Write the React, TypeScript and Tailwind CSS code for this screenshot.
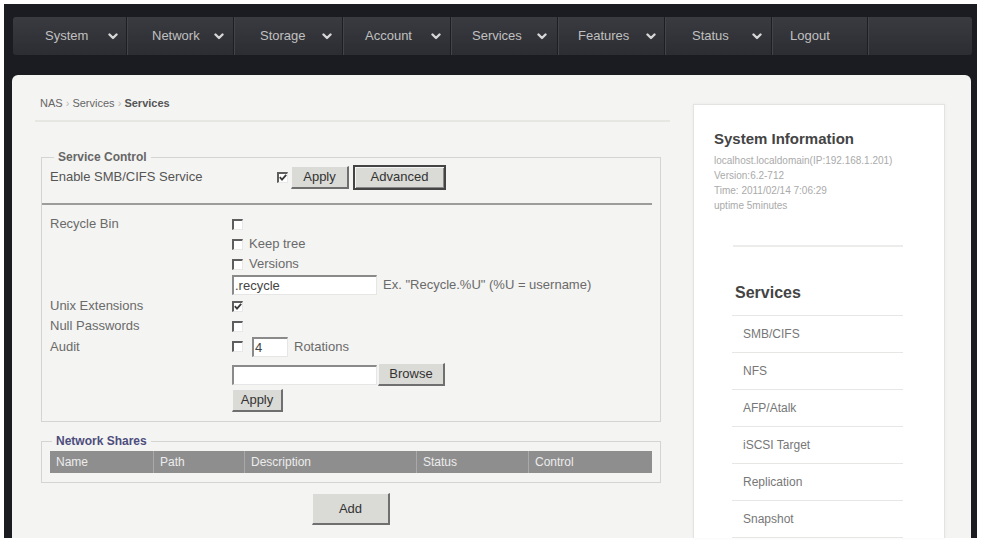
import type { ReactNode } from 'react';

const navItems = [
  { label: 'System', cell: 'w-[114px] pl-[32px] pr-[8px]', caret: true },
  { label: 'Network', cell: 'w-[107px] pl-[25px] pr-[9px]', caret: true },
  { label: 'Storage', cell: 'w-[109px] pl-[26px] pr-[10px]', caret: true },
  { label: 'Account', cell: 'w-[108px] pl-[22px] pr-[9px]', caret: true },
  { label: 'Services', cell: 'w-[107px] pl-[21px] pr-[10px]', caret: true },
  { label: 'Features', cell: 'w-[107px] pl-[20px] pr-[8px]', caret: true },
  { label: 'Status', cell: 'w-[107px] pl-[27px] pr-[9px]', caret: true },
  { label: 'Logout', cell: 'w-[96px] pl-[18px]', caret: false },
];

const columns = [
  { label: 'Name', w: 'w-[104px]' },
  { label: 'Path', w: 'w-[91px]' },
  { label: 'Description', w: 'w-[172px]' },
  { label: 'Status', w: 'w-[112px]' },
  { label: 'Control', w: 'flex-1' },
];

const serviceLinks = ['SMB/CIFS', 'NFS', 'AFP/Atalk', 'iSCSI Target', 'Replication', 'Snapshot'];

function Caret() {
  return (
    <svg width="10" height="7" viewBox="0 0 10 7" fill="none">
      <path d="M1.5 1.5 L5 5 L8.5 1.5" stroke="#d6d6d6" strokeWidth="2.4" strokeLinecap="round" strokeLinejoin="round" />
    </svg>
  );
}

function Check({ checked = false }: { checked?: boolean }) {
  return (
    <span className="inline-flex h-[11px] w-[11px] shrink-0 items-center justify-center border-b border-l-2 border-r border-t-2 border-b-[#e8e8e8] border-l-[#5e5e5e] border-r-[#e8e8e8] border-t-[#5e5e5e] bg-white">
      {checked && (
        <svg width="8" height="7" viewBox="0 0 8 7" fill="none">
          <path d="M0.8 3.2 L3 5.6 L7.2 0.8" stroke="#3a3a3a" strokeWidth="1.8" />
        </svg>
      )}
    </span>
  );
}

function Btn({ children, className = '' }: { children: ReactNode; className?: string }) {
  return (
    <button
      className={`flex items-center justify-center border border-b-2 border-r-2 border-b-[#6f6f6f] border-l-[#f4f4f4] border-r-[#6f6f6f] border-t-[#f4f4f4] bg-[#dadad6] text-[13px] text-[#333] ${className}`}
    >
      {children}
    </button>
  );
}

function TextBox({ value = '', className = '' }: { value?: string; className?: string }) {
  return (
    <input
      readOnly
      value={value}
      className={`h-[20px] border-b border-l-2 border-r border-t-2 border-b-[#e6e6e6] border-l-[#8a8a8a] border-r-[#e6e6e6] border-t-[#8a8a8a] bg-white px-[1px] text-[13px] text-[#444] outline-none ${className}`}
    />
  );
}

export default function App() {
  return (
    <div className="h-[542px] w-[982px] overflow-hidden bg-white font-['Liberation_Sans',Arial,sans-serif]">
      <div className="ml-[4px] mt-[4px] flex h-[534px] w-[973px] flex-col bg-[#1b1c21] pt-[13px]">
        {/* top menu */}
        <nav className="ml-[9px] flex h-[38px] w-[959px] rounded-[3px] bg-linear-to-b from-[#3a3b40] to-[#2c2d32] text-[13px] text-[#c0c0c0]">
          {navItems.map((item) => (
            <div
              key={item.label}
              className={`flex items-center justify-between border-r border-[#1d1e22] shadow-[1px_0_0_#43444a] ${item.cell}`}
            >
              <span>{item.label}</span>
              {item.caret && <Caret />}
            </div>
          ))}
          <div className="flex-1" />
        </nav>

        {/* content panel */}
        <div className="ml-[8px] mt-[20px] flex w-[959px] flex-1 rounded-t-[6px] bg-[#f4f4f2]">
          <div className="w-[668px] pl-[23px]">
            <div className="h-[47px] w-[635px] border-b-2 border-[#e6e6e3] pl-[5px] pt-[21px] text-[11px] leading-[14px] text-[#666]">
              NAS <span className="text-[#bbb]">›</span> Services <span className="text-[#bbb]">›</span>{' '}
              <span className="font-bold text-[#555]">Services</span>
            </div>

            <fieldset className="ml-[6px] mt-[28px] w-[620px] border border-[#d4d4d2]">
              <legend className="ml-[12px] px-[4px] text-[12px] font-bold leading-[14px] text-[#666]">Service Control</legend>
              <div className="flex h-[25px] items-center pl-[8px] pt-[1px]">
                <span className="w-[227px] text-[13px] text-[#555]">Enable SMB/CIFS Service</span>
                <Check checked />
                <Btn className="ml-[3px] h-[23px] w-[58px]">Apply</Btn>
                <button className="ml-[4px] flex h-[25px] w-[93px] items-center justify-center border-2 border-[#444] bg-[#dadad6] text-[13px] text-[#333] shadow-[inset_1px_1px_0_#f4f4f4,inset_-1px_-1px_0_#888]">
                  Advanced
                </button>
              </div>
              <div className="mt-[14px] h-[2px] w-[610px] bg-[#9c9c9a]" />

              <div className="mt-[9px] grid grid-cols-[182px_1fr] pl-[8px] text-[13px] text-[#6a6a6a]">
                <div className="flex h-[20px] items-center">Recycle Bin</div>
                <div className="flex h-[20px] items-center">
                  <Check />
                </div>
                <div />
                <div className="flex h-[20px] items-center gap-[6px]">
                  <Check />
                  Keep tree
                </div>
                <div />
                <div className="flex h-[20px] items-center gap-[6px]">
                  <Check />
                  Versions
                </div>
                <div />
                <div className="flex h-[22px] items-center">
                  <TextBox value=".recycle" className="w-[145px]" />
                  <span className="ml-[6px]">Ex. "Recycle.%U" (%U = username)</span>
                </div>
                <div className="flex h-[20px] items-center">Unix Extensions</div>
                <div className="flex h-[20px] items-center">
                  <Check checked />
                </div>
                <div className="flex h-[20px] items-center">Null Passwords</div>
                <div className="flex h-[20px] items-center">
                  <Check />
                </div>
                <div className="flex h-[21px] items-center">Audit</div>
                <div className="flex h-[21px] items-center">
                  <Check />
                  <TextBox value="4" className="ml-[9px] w-[36px]" />
                  <span className="ml-[6px]">Rotations</span>
                </div>
                <div />
                <div className="mt-[6px] flex h-[23px] items-center">
                  <TextBox className="w-[145px]" />
                  <Btn className="ml-[1px] h-[23px] w-[67px]">Browse</Btn>
                </div>
                <div />
                <div className="mt-[3px] flex h-[23px] items-center">
                  <Btn className="h-[23px] w-[51px]">Apply</Btn>
                </div>
              </div>
              <div className="h-[9px]" />
            </fieldset>

            <fieldset className="ml-[6px] mt-[12px] w-[620px] border border-[#d4d4d2]">
              <legend className="ml-[10px] px-[4px] text-[12px] font-bold leading-[14px] text-[#4d4d7d]">Network Shares</legend>
              <div className="ml-[8px] mt-[3px] flex h-[22px] w-[602px] bg-[#8e8e8e] text-[12px] text-[#ececec]">
                {columns.map((c, i) => (
                  <div
                    key={c.label}
                    className={`flex items-center pl-[6px] ${c.w} ${i < columns.length - 1 ? 'border-r border-[#a9a9a9]' : ''}`}
                  >
                    {c.label}
                  </div>
                ))}
              </div>
              <div className="h-[9px]" />
            </fieldset>

            <div className="ml-[6px] mt-[10px] flex w-[620px] justify-center">
              <Btn className="h-[32px] w-[78px]">Add</Btn>
            </div>
          </div>

          {/* sidebar */}
          <aside className="ml-[13px] mt-[29px] w-[252px] border border-b-0 border-[#e3e3e1] bg-white pl-[20px] shadow-[0_0_3px_rgba(0,0,0,0.05)]">
            <h2 className="pt-[25px] text-[15px] font-bold leading-[18px] text-[#444]">System Information</h2>
            <div className="mt-[5px] text-[10px] leading-[15px] text-[#aaa]">
              <div>localhost.localdomain(IP:192.168.1.201)</div>
              <div>Version:6.2-712</div>
              <div>Time: 2011/02/14 7:06:29</div>
              <div>uptime 5minutes</div>
            </div>
            <div className="ml-[19px] mt-[32px] h-[2px] w-[170px] bg-[#ececea]" />
            <h2 className="ml-[21px] mt-[37px] text-[16px] font-bold leading-[18px] text-[#444]">Services</h2>
            <ul className="ml-[18px] mt-[13px] w-[171px] border-t border-[#e6e6e4]">
              {serviceLinks.map((s) => (
                <li key={s} className="flex h-[37px] items-center border-b border-[#e6e6e4] pl-[11px] text-[12px] text-[#777]">
                  {s}
                </li>
              ))}
            </ul>
          </aside>
        </div>
      </div>
    </div>
  );
}
